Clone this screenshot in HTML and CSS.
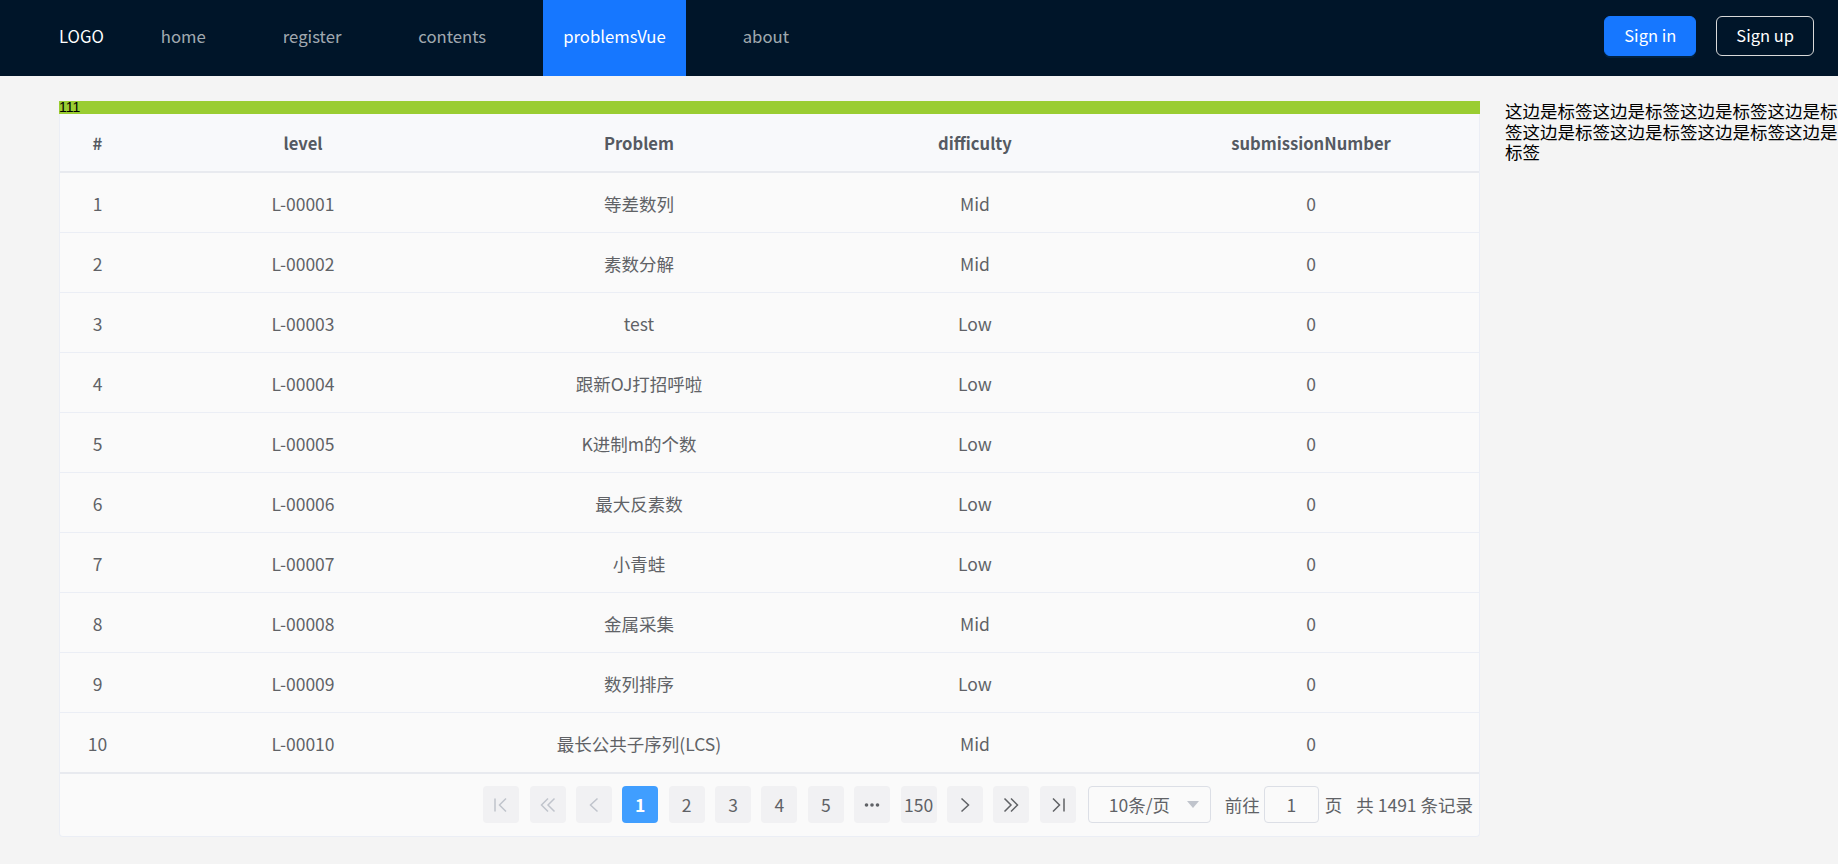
FILE: index.html
```html
<!DOCTYPE html>
<html lang="zh-CN">
<head>
<meta charset="utf-8">
<title>problemsVue</title>
<link rel="stylesheet" href="styles.css">
</head>
<body>
<header class="topbar">
  <div class="logo">LOGO</div>
  <nav class="menu">
    <a class="menu-item">home</a>
    <a class="menu-item">register</a>
    <a class="menu-item">contents</a>
    <a class="menu-item is-active">problemsVue</a>
    <a class="menu-item">about</a>
  </nav>
  <div class="auth">
    <button class="btn btn-primary">Sign in</button>
    <button class="btn btn-ghost">Sign up</button>
  </div>
</header>
<main class="layout">
  <section class="content">
    <div class="tagbar">111</div>
    <div class="card">
      <table class="grid">
        <colgroup><col class="col-idx"><col><col><col><col></colgroup>
        <thead>
          <tr><th>#</th><th>level</th><th>Problem</th><th>difficulty</th><th>submissionNumber</th></tr>
        </thead>
        <tbody>
          <tr><td>1</td><td>L-00001</td><td>等差数列</td><td>Mid</td><td>0</td></tr>
          <tr><td>2</td><td>L-00002</td><td>素数分解</td><td>Mid</td><td>0</td></tr>
          <tr><td>3</td><td>L-00003</td><td>test</td><td>Low</td><td>0</td></tr>
          <tr><td>4</td><td>L-00004</td><td>跟新OJ打招呼啦</td><td>Low</td><td>0</td></tr>
          <tr><td>5</td><td>L-00005</td><td>K进制m的个数</td><td>Low</td><td>0</td></tr>
          <tr><td>6</td><td>L-00006</td><td>最大反素数</td><td>Low</td><td>0</td></tr>
          <tr><td>7</td><td>L-00007</td><td>小青蛙</td><td>Low</td><td>0</td></tr>
          <tr><td>8</td><td>L-00008</td><td>金属采集</td><td>Mid</td><td>0</td></tr>
          <tr><td>9</td><td>L-00009</td><td>数列排序</td><td>Low</td><td>0</td></tr>
          <tr><td>10</td><td>L-00010</td><td>最长公共子序列(LCS)</td><td>Mid</td><td>0</td></tr>
        </tbody>
      </table>
      <div class="pager">
        <div class="pages">
          <span class="pg is-disabled"><svg viewBox="0 0 18 16" class="ico"><path d="M3 1.5v13M14 1.5L7.5 8 14 14.5"/></svg></span>
          <span class="pg is-disabled"><svg viewBox="0 0 18 16" class="ico"><path d="M9 1.5L2.5 8 9 14.5M15.5 1.5L9 8l6.5 6.5"/></svg></span>
          <span class="pg is-disabled"><svg viewBox="0 0 18 16" class="ico"><path d="M12.5 1.5L5.5 8l7 6.5"/></svg></span>
          <span class="pg is-current">1</span>
          <span class="pg">2</span>
          <span class="pg">3</span>
          <span class="pg">4</span>
          <span class="pg">5</span>
          <span class="pg"><svg viewBox="0 0 18 16" class="dots"><circle cx="3.5" cy="8" r="1.8"/><circle cx="9" cy="8" r="1.8"/><circle cx="14.5" cy="8" r="1.8"/></svg></span>
          <span class="pg">150</span>
          <span class="pg"><svg viewBox="0 0 18 16" class="ico"><path d="M5.5 1.5l7 6.5-7 6.5"/></svg></span>
          <span class="pg"><svg viewBox="0 0 18 16" class="ico"><path d="M2.5 1.5L9 8l-6.5 6.5M9 1.5L15.5 8 9 14.5"/></svg></span>
          <span class="pg"><svg viewBox="0 0 18 16" class="ico"><path d="M4 1.5L10.5 8 4 14.5M15 1.5v13"/></svg></span>
        </div>
        <div class="sizes">
          <span>10条/页</span>
          <svg viewBox="0 0 12 7" class="caret"><path d="M0 0h12L6 7z"/></svg>
        </div>
        <span class="jump">前往</span>
        <span class="jump-input">1</span>
        <span class="jump-unit">页</span>
        <span class="total">共 1491 条记录</span>
      </div>
    </div>
  </section>
  <aside class="sidebar">这边是标签这边是标签这边是标签这边是标签这边是标签这边是标签这边是标签这边是标签</aside>
</main>
</body>
</html>
```

FILE: styles.css
```css
html, body {
  margin: 0;
  padding: 0;
}
body {
  background: #f4f4f4;
  font-family: "Noto Sans CJK SC", "Open Sans", sans-serif;
  overflow: hidden;
}

/* top bar */
.topbar {
  display: flex;
  align-items: stretch;
  height: 76px;
  background: #001529;
  padding: 0 24px 0 59px;
}
.logo {
  display: flex;
  align-items: center;
  padding-bottom: 4px;
  color: #fff;
  font-size: 16.7px;
  margin-right: 37px;
}
.menu {
  display: flex;
  gap: 37px;
}
.menu-item {
  display: flex;
  align-items: center;
  padding: 0 20px 4px;
  color: rgba(255, 255, 255, 0.65);
  font-size: 16.7px;
}
.menu-item.is-active {
  background: #1677ff;
  color: #fff;
}
.auth {
  margin-left: auto;
  display: flex;
  align-items: center;
  gap: 20px;
  padding-bottom: 4px;
}
.btn {
  height: 40px;
  padding: 0 19px 2px;
  border-radius: 6px;
  font-family: inherit;
  font-size: 16.5px;
  color: #fff;
  cursor: pointer;
}
.btn-primary {
  background: #1677ff;
  border: 1px solid #1677ff;
  box-shadow: 0 2px 0 rgba(5, 145, 255, 0.1);
}
.btn-ghost {
  background: transparent;
  border: 1px solid #d9d9d9;
}

/* layout */
.layout {
  display: flex;
  align-items: flex-start;
  padding: 25px 0 0 59px;
  gap: 25px;
}
.content {
  width: 1421px;
  flex: none;
}
.tagbar {
  height: 13px;
  background: #9acd32;
  color: #000;
  font-family: "Liberation Sans", sans-serif;
  font-size: 14px;
  line-height: 13px;
}
.card {
  background: #fafafa;
  border: 1px solid #ebeef5;
  border-top: none;
  border-radius: 0 0 4px 4px;
}
.sidebar {
  width: 333px;
  flex: none;
  color: #000;
  font-size: 17.5px;
  line-height: 20.5px;
  word-break: break-all;
}

/* table */
.grid {
  width: 100%;
  border-collapse: collapse;
  table-layout: fixed;
  font-size: 17.5px;
  color: #606266;
}
.col-idx {
  width: 75px;
}
.grid th {
  height: 57px;
  padding: 0;
  background: #f8f9fb;
  color: #555a62;
  font-size: 16.6px;
  font-weight: 700;
  border-bottom: 2px solid #e8eaef;
}
.grid td {
  height: 57px;
  padding: 2px 0 0;
  text-align: center;
  border-bottom: 1px solid #ebeef5;
}
.grid tbody tr:last-child td {
  border-bottom: 2px solid #e8eaef;
}

/* pager */
.pager {
  display: flex;
  justify-content: flex-end;
  align-items: center;
  padding: 12px 6px 13px 0;
  color: #606266;
  font-size: 17.5px;
}
.pages {
  display: flex;
  gap: 10.4px;
  margin-right: 12px;
}
.pg {
  width: 36px;
  height: 37px;
  display: flex;
  align-items: center;
  justify-content: center;
  background: #f1f1f3;
  border-radius: 4px;
  color: #606266;
}
.pg.is-current {
  background: #409eff;
  color: #fff;
  font-weight: 700;
}
.ico {
  width: 18px;
  height: 16px;
  fill: none;
  stroke: #606266;
  stroke-width: 1.5;
}
.pg.is-disabled .ico {
  stroke: #c0c4cc;
}
.dots {
  width: 18px;
  height: 16px;
  fill: #606266;
}
.sizes {
  width: 123px;
  height: 37px;
  box-sizing: border-box;
  border: 1px solid #dcdfe6;
  border-radius: 4px;
  display: flex;
  align-items: center;
  justify-content: space-between;
  padding: 0 11px 0 20px;
  margin-right: 14px;
}
.caret {
  width: 12px;
  height: 7px;
  fill: #c0c4cc;
}
.jump {
  margin-right: 4px;
}
.jump-input {
  width: 55px;
  height: 37px;
  box-sizing: border-box;
  border: 1px solid #dcdfe6;
  border-radius: 4px;
  display: flex;
  align-items: center;
  justify-content: center;
  margin-right: 6px;
}
.jump-unit {
  margin-right: 14px;
}
```
